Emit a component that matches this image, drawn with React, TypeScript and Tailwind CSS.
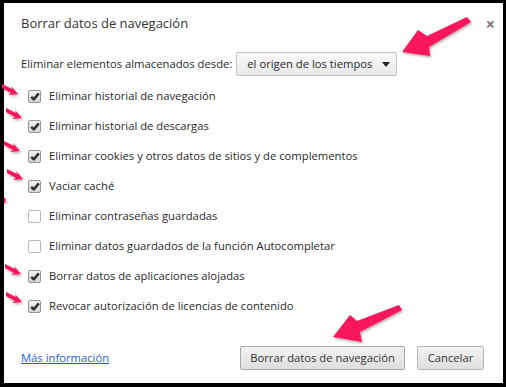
import { useState } from 'react'

const OPTIONS = [
  { key: 'history', label: 'Eliminar historial de navegación', checked: true },
  { key: 'downloads', label: 'Eliminar historial de descargas', checked: true },
  { key: 'cookies', label: 'Eliminar cookies y otros datos de sitios y de complementos', checked: true },
  { key: 'cache', label: 'Vaciar caché', checked: true },
  { key: 'passwords', label: 'Eliminar contraseñas guardadas', checked: false },
  { key: 'autofill', label: 'Eliminar datos guardados de la función Autocompletar', checked: false },
  { key: 'hosted', label: 'Borrar datos de aplicaciones alojadas', checked: true },
  { key: 'licenses', label: 'Revocar autorización de licencias de contenido', checked: true },
]

const FONT = "font-['Open_Sans','Noto_Sans',sans-serif]"

function Checkbox({ checked }: { checked: boolean }) {
  return (
    <span
      className={
        checked
          ? 'flex h-[13px] w-[13px] items-center justify-center rounded-[2px] border border-[#959595] bg-gradient-to-b from-[#f4f4f4] to-[#d4d4d4]'
          : 'flex h-[13px] w-[13px] items-center justify-center rounded-[2px] border border-[#b8b8b8] bg-white'
      }
    >
      {checked && (
        <svg width="10" height="9" viewBox="0 0 10 9">
          <path d="M1.2 4.8 L3.8 7.4 L8.8 1.4" fill="none" stroke="#303030" strokeWidth="2.5" strokeLinejoin="round" />
        </svg>
      )}
    </span>
  )
}

// flechas rosas superpuestas
function Arrows() {
  const small = [
    [18, 94],
    [22, 118],
    [20, 151],
    [23, 179],
    [21, 274],
    [22, 302],
  ]
  return (
    <svg className="pointer-events-none absolute left-0 top-0" width="506" height="387" viewBox="0 0 506 387">
      <defs>
        <filter id="sh" x="-20%" y="-20%" width="140%" height="140%">
          <feDropShadow dx="1" dy="1.5" stdDeviation="1.2" floodColor="#000" floodOpacity="0.35" />
        </filter>
      </defs>
      <g fill="#f8145c" filter="url(#sh)">
        <polygon points="467,17 427,36 418,30 402,52 430,56 429,47 471,22" />
        <polygon points="399,305 357,321 350,315 333,337 362,342 360,332 402,310" />
        {small.map(([tx, ty]) => (
          <polygon
            key={`${tx}-${ty}`}
            points={`${tx - 16},${ty - 10} ${tx - 6},${ty - 5} ${tx - 7},${ty - 8} ${tx},${ty} ${tx - 10},${ty + 1} ${tx - 7},${ty - 1} ${tx - 16},${ty - 6}`}
          />
        ))}
        <rect x="4" y="198" width="1.5" height="5" />
      </g>
    </svg>
  )
}

export default function App() {
  const [options] = useState(OPTIONS)

  return (
    <div className={`relative h-[387px] w-[506px] bg-black pb-[4px] pl-[4px] pr-[3px] pt-[3px] ${FONT}`}>
      <div className="flex h-full w-full flex-col bg-white px-[17px] pb-[13px] pt-[11px] text-[#2a2a2a]">
        <div className="-mr-[9px] flex h-5 items-center justify-between">
          <h1 className="text-[13px] text-[#333]">Borrar datos de navegación</h1>
          <span className="text-[16px] font-bold leading-none text-[#777]">×</span>
        </div>

        <div className="mt-[18px] flex h-6 items-center text-[11.25px]">
          <span>Eliminar elementos almacenados desde:</span>
          <div className="ml-[4px] flex h-6 w-[161px] items-center justify-between rounded-[2px] border border-[#c4c4c4] bg-gradient-to-b from-[#fafafa] to-[#e8e8e8] pl-[10px] pr-[6px]">
            <span>el origen de los tiempos</span>
            <span className="h-0 w-0 border-x-[4px] border-t-[5px] border-x-transparent border-t-[#222]" />
          </div>
        </div>

        <div className="mt-[5px] flex flex-col text-[11.25px]">
          {options.map((opt) => (
            <label key={opt.key} className="flex h-[30px] items-center gap-[8px] pl-[7px]">
              <Checkbox checked={opt.checked} />
              <span>{opt.label}</span>
            </label>
          ))}
        </div>

        <div className="mt-auto flex items-center justify-between pr-[2px]">
          <a className="text-[11.25px] text-[#1a5ee0] underline">Más información</a>
          <div className="flex gap-[12px]">
            <button className="h-6 w-[165px] rounded-[2px] border border-[#a9a9a9] bg-gradient-to-b from-[#f3f3f3] to-[#dedede] text-[11.25px] text-[#333]">
              Borrar datos de navegación
            </button>
            <button className="h-6 w-[67px] rounded-[2px] border border-[#b5b5b5] bg-gradient-to-b from-[#f3f3f3] to-[#dedede] text-[11.25px] text-[#333]">
              Cancelar
            </button>
          </div>
        </div>
      </div>
      <Arrows />
    </div>
  )
}
